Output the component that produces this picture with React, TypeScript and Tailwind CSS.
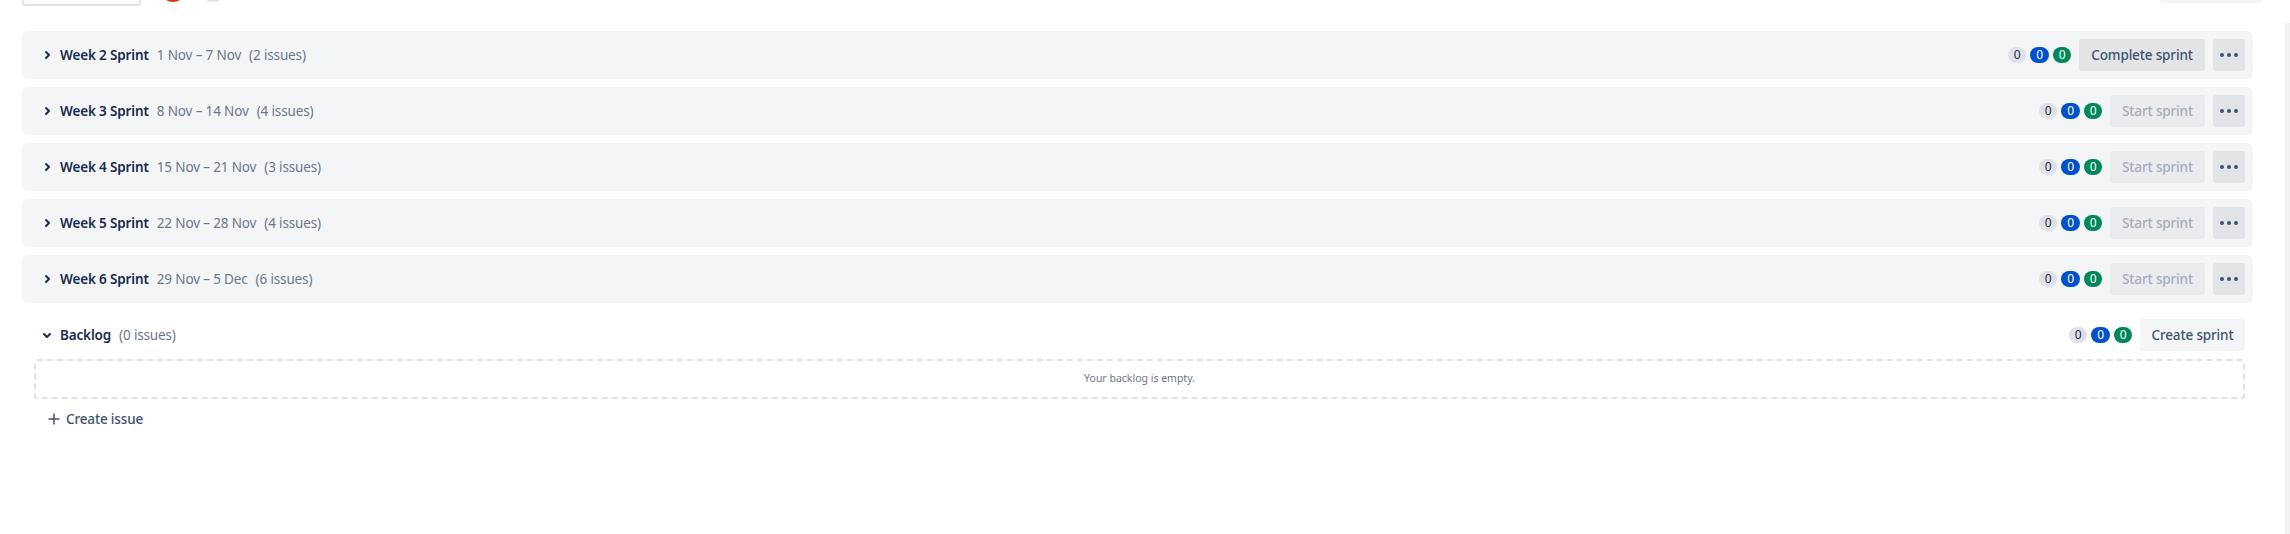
import React from "react";

const sprints = [
  { name: "Week 2 Sprint", dates: "1 Nov – 7 Nov", issues: 2, active: true },
  { name: "Week 3 Sprint", dates: "8 Nov – 14 Nov", issues: 4, active: false },
  { name: "Week 4 Sprint", dates: "15 Nov – 21 Nov", issues: 3, active: false },
  { name: "Week 5 Sprint", dates: "22 Nov – 28 Nov", issues: 4, active: false },
  { name: "Week 6 Sprint", dates: "29 Nov – 5 Dec", issues: 6, active: false },
];

function ChevronRight() {
  return (
    <svg width="24" height="24" viewBox="0 0 24 24" className="shrink-0">
      <path
        d="M10.294 9.698a.988.988 0 0 1 0-1.407 1.01 1.01 0 0 1 1.419 0l2.965 2.94a1.09 1.09 0 0 1 0 1.548l-2.955 2.93a1.01 1.01 0 0 1-1.42 0 .988.988 0 0 1 0-1.407l2.318-2.297-2.327-2.307z"
        fill="#172b4d"
      />
    </svg>
  );
}

function ChevronDown() {
  return (
    <svg width="24" height="24" viewBox="0 0 24 24" className="shrink-0">
      <path
        d="M9.698 10.294a.988.988 0 0 0-1.407 0 1.01 1.01 0 0 0 0 1.419l2.94 2.965a1.09 1.09 0 0 0 1.548 0l2.93-2.955a1.01 1.01 0 0 0 0-1.42.988.988 0 0 0-1.407 0l-2.297 2.318-2.307-2.327z"
        fill="#172b4d"
      />
    </svg>
  );
}

function MoreIcon() {
  return (
    <svg width="24" height="24" viewBox="0 0 24 24">
      <circle cx="5" cy="12" r="2" fill="#42526e" />
      <circle cx="12" cy="12" r="2" fill="#42526e" />
      <circle cx="19" cy="12" r="2" fill="#42526e" />
    </svg>
  );
}

function Badges() {
  return (
    <div className="flex items-center gap-[4px]">
      <span className="min-w-[18px] h-[16px] px-[5px] rounded-full bg-[#dfe1e6] text-[#172b4d] text-[12px] leading-[16px] text-center">
        0
      </span>
      <span className="min-w-[19px] h-[16px] px-[5px] rounded-full bg-[#0052cc] text-white text-[12px] leading-[16px] text-center">
        0
      </span>
      <span className="min-w-[18px] h-[16px] px-[5px] rounded-full bg-[#00875a] text-white text-[12px] leading-[16px] text-center">
        0
      </span>
    </div>
  );
}

function SprintCard({
  name,
  dates,
  issues,
  active,
}: {
  name: string;
  dates: string;
  issues: number;
  active: boolean;
}) {
  return (
    <div className="h-[48px] rounded-[6px] bg-[#f4f5f7] flex items-center pl-[13px] pr-[8px] text-[13.5px] tracking-[-0.15px]">
      <ChevronRight />
      <span className="ml-[1px] font-semibold text-[#172b4d]">{name}</span>
      <span className="ml-[8px] text-[#6b778c]">{dates}</span>
      <span className="ml-[8px] text-[#6b778c]">({issues} issues)</span>
      <div className="ml-auto flex items-center">
        <Badges />
        {active ? (
          <button className="ml-[8px] w-[126px] h-[32px] rounded-[3px] bg-[#e3e4e8] text-[#42526e] font-medium">
            Complete sprint
          </button>
        ) : (
          <button className="ml-[8px] w-[95px] h-[32px] rounded-[3px] bg-[#eaebef] text-[#a5adba] font-medium">
            Start sprint
          </button>
        )}
        <button className="ml-[8px] w-[32px] h-[32px] rounded-[3px] bg-[#e3e4e8] flex items-center justify-center">
          <MoreIcon />
        </button>
      </div>
    </div>
  );
}

export default function App() {
  return (
    <div className="w-[2290px] h-[534px] bg-white flex overflow-hidden font-['Noto_Sans',sans-serif]">
      <div className="w-[2231px] ml-[22px] flex flex-col">
        {/* header (mostly scrolled out of view) */}
        <div className="h-[32px] -mt-[26px] mb-[25px] flex items-end">
          <div className="w-[119px] h-[32px] rounded-[3px] border-2 border-[#dfe1e6] bg-[#fafbfc]" />
          <div className="ml-[17px] mb-[2px] w-[30px] h-[30px] rounded-full bg-[#de350b] border-2 border-white" />
          <div className="ml-[10px] mb-[2px] w-[30px] h-[30px] rounded-full bg-[#dfe1e6] border-2 border-white" />
          <div className="ml-auto -mr-[9px] mb-[3px] w-[102px] h-[32px] rounded-[3px] bg-[#f4f5f7]" />
        </div>

        <div className="flex flex-col gap-[8px]">
          {sprints.map((s) => (
            <SprintCard key={s.name} {...s} />
          ))}
        </div>

        {/* Backlog */}
        <div className="mt-[8px] h-[48px] flex items-center pl-[13px] pr-[8px] text-[13.5px] tracking-[-0.15px]">
          <ChevronDown />
          <span className="ml-[1px] font-semibold text-[#172b4d]">Backlog</span>
          <span className="ml-[8px] text-[#6b778c]">(0 issues)</span>
          <div className="ml-auto flex items-center">
            <Badges />
            <button className="ml-[8px] w-[105px] h-[32px] rounded-[3px] bg-[#f4f5f7] text-[#42526e] font-medium">
              Create sprint
            </button>
          </div>
        </div>
        <div className="ml-[12px] mr-[8px] h-[40px] rounded-[3px] border-2 border-dashed border-[#dfe1e6] flex items-center justify-center text-[10.5px] text-[#6b778c]">
          Your backlog is empty.
        </div>
        <div className="mt-[4px] h-[32px] flex items-center pl-[26px]">
          <svg width="12" height="12" viewBox="0 0 12 12">
            <path d="M6 0.5v11M0.5 6h11" stroke="#42526e" strokeWidth="1.5" />
          </svg>
          <span className="ml-[6px] text-[13.5px] tracking-[-0.15px] text-[#42526e] font-medium">
            Create issue
          </span>
        </div>
      </div>
      <div className="ml-auto mt-[23px] w-[5px] bg-[#f0f1f3]" />
    </div>
  );
}
